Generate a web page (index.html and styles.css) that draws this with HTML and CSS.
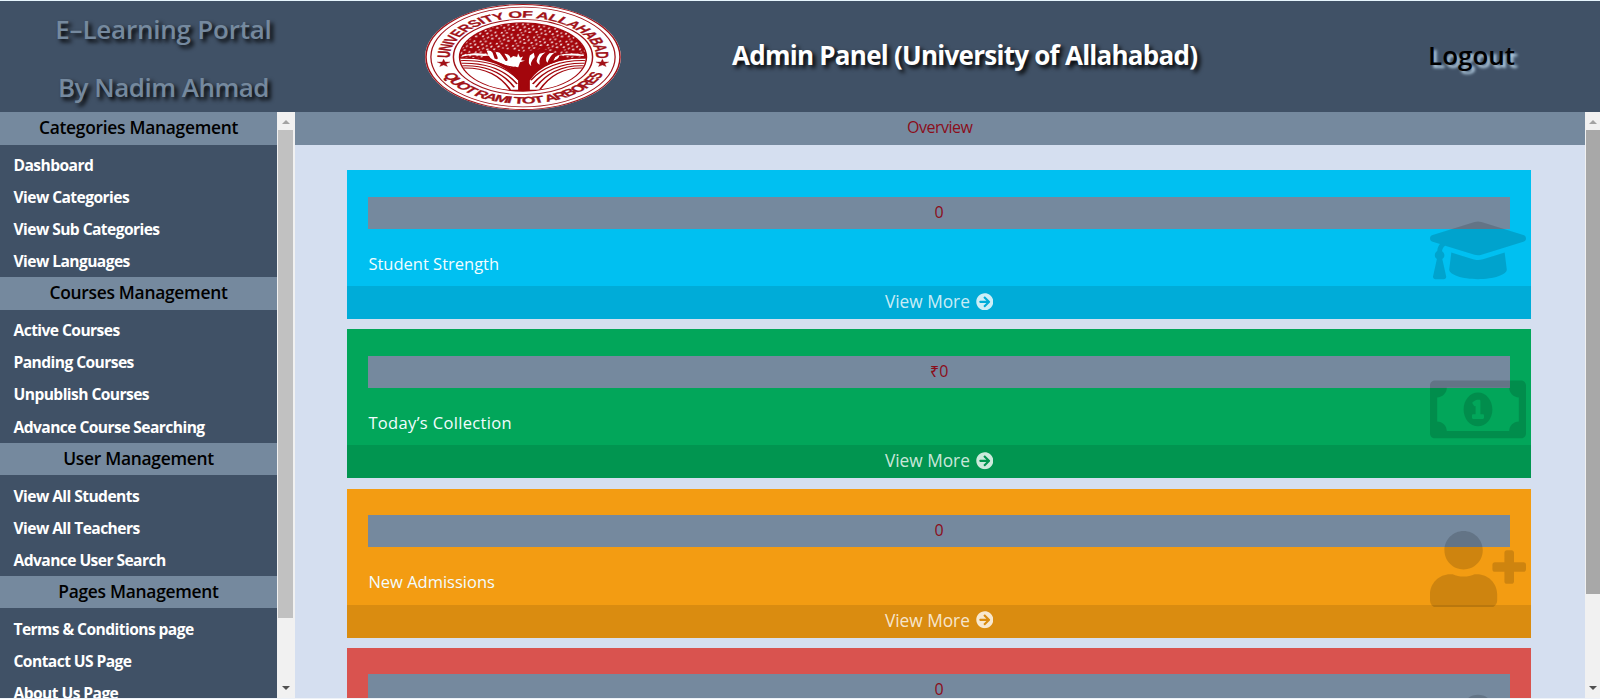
FILE: index.html
```html
<!DOCTYPE html>
<html lang="en">
<head>
<meta charset="utf-8">
<title>Admin Panel</title>
<link rel="stylesheet" href="styles.css">
</head>
<body>
<svg width="0" height="0" class="defs">
  <symbol id="arrow" viewBox="0 0 512 512"><path d="M256 8c137 0 248 111 248 248S393 504 256 504 8 393 8 256 119 8 256 8zm-28.9 143.6l75.5 72.4H120c-13.3 0-24 10.7-24 24v16c0 13.3 10.7 24 24 24h182.6l-75.5 72.4c-9.7 9.3-9.9 24.8-.4 34.3l11 10.9c9.4 9.4 24.6 9.4 33.9 0L404.3 273c9.4-9.4 9.4-24.6 0-33.9L271.6 106.3c-9.4-9.4-24.6-9.4-33.9 0l-11 10.9c-9.5 9.6-9.3 25.1.4 34.4z"/></symbol>
</svg>
<header class="header">
  <div class="brand"><span>E–Learning Portal</span><span class="brand-by">By Nadim Ahmad</span></div>
  <svg class="logo" viewBox="-100 -100 200 200" preserveAspectRatio="none">
    <defs>
      <path id="top" d="M-74.500 6A74.700 74.700 0 1 1 74.500 6"/>
      <path id="bottom" d="M-88 0A88 88 0 0 0 88 0"/>
      <clipPath id="disc"><circle r="64"/></clipPath>
      <pattern id="leaves" width="17" height="21" patternUnits="userSpaceOnUse" patternTransform="rotate(14)">
        <g fill="#fff" opacity=".85"><ellipse cx="2" cy="3" rx="1.1" ry="1.9"/><ellipse cx="7" cy="1.8" rx="1.4" ry="1.4"/><ellipse cx="12.5" cy="4" rx="1" ry="2"/><ellipse cx="5" cy="8" rx="1.3" ry="1.8"/><ellipse cx="10" cy="9.6" rx="1.2" ry="1.5"/><ellipse cx="15" cy="10" rx="1.1" ry="2"/><ellipse cx="2" cy="14" rx="1.2" ry="1.7"/><ellipse cx="7.5" cy="15" rx="1" ry="2"/><ellipse cx="12.3" cy="16" rx="1.4" ry="1.6"/><ellipse cx="4.4" cy="19" rx="1" ry="1.2"/></g>
      </pattern>
    </defs>
    <circle r="100" fill="#fff"/>
    <g fill="none" stroke="#a11218"><circle r="99" stroke-width="1.6"/><circle r="94" stroke-width="1.3"/><circle r="71" stroke-width="1.5"/></g>
    <circle r="65.5" fill="#a3060c"/>
    <g clip-path="url(#disc)">
      <path fill="url(#leaves)" d="M-66 0V-68H66V0L46 2 20-16 0-10-22-16-44 4z"/>
      <g fill="#fff">
        <path d="M-37-12q4-2 6 4l2 11q4 4 3-3l-2-9q4-2 6 5l4 11q3 2 2-4l-3-9q4-1 6 6l3 14q-1 8-7 2l-10-8q-8-4-10-20z"/>
        <path d="M-10-2l4 2 1-7 2 8 3-2-2 7 4 1-5 3 4 4-5 2 2 6-6-4-5 3 2-7-5-2 5-3-3-5z"/>
        <path d="M7-3l4-5 1 8q-6 12-3 19-5-6-2-22zM17-6l6-3q-8 10-6 24-6-6 0-21zM27-7l5-1q-5 7-7 19-4-8 2-18zM33 0l4-4q0 8-6 11z"/>
        <path d="M-66 3Q-24 0-5 44L-5 62H-24Q-54 50-66 25zM66 3Q24 0 7 44L7 62H24Q54 50 66 25z"/>
        <path d="M-62-4l12-3q10-1 18 4l-8 1q-12-3-22 1zM62-4Q50-10 34-3q10-1 28 1z"/>
      </g>
      <g fill="none" stroke="#a3060c" stroke-width="1.9">
        <path d="M-66 2Q-22-1-3 37M-66 7Q-24 4-4 44M-66 12Q-26 8-6 51M-66 17Q-28 12-9 57M-64 21Q-30 17-13 62M66 2Q26-1 7 37M66 7Q28 4 8 44M66 12Q30 8 10 51M66 17Q32 12 13 57M64 21Q34 17 17 62"/>
      </g>
      <path fill="#a3060c" d="M-34 10Q-12 15-6 30Q-4 46-1 65H3Q5 44 9 30Q15 17 34 10L8 17 3 8-3 10-5 20z"/>
    </g>
    <g fill="#a11218" class="seal-text">
      <text><textPath href="#top" startOffset="4" textLength="238" lengthAdjust="spacing">UNIVERSITY OF ALLAHABAD</textPath></text>
      <text><textPath href="#bottom" startOffset="34" textLength="210" lengthAdjust="spacing">QUOT RAMI TOT ARBORES</textPath></text>
      <path d="M-81 4l1.500 5.300 5 .1-4 3.300 1.400 5.400-3.900-3.200-4 3.200 1.400-5.400-4-3.300 5.100-.1zM81 4l1.500 5.300 5 .1-4 3.300 1.400 5.400-3.900-3.200-4 3.200 1.400-5.400-4-3.300 5.100-.1z"/>
    </g>
  </svg>
  <h1 class="title">Admin Panel (University of Allahabad)</h1>
  <a class="logout">Logout</a>
</header>
<div class="body">
  <nav class="sidebar">
    <h2 class="bar">Categories Management</h2>
    <ul><li>Dashboard</li><li>View Categories</li><li>View Sub Categories</li><li>View Languages</li></ul>
    <h2 class="bar">Courses Management</h2>
    <ul><li>Active Courses</li><li>Panding Courses</li><li>Unpublish Courses</li><li>Advance Course Searching</li></ul>
    <h2 class="bar">User Management</h2>
    <ul><li>View All Students</li><li>View All Teachers</li><li>Advance User Search</li></ul>
    <h2 class="bar">Pages Management</h2>
    <ul><li>Terms &amp; Conditions page</li><li>Contact US Page</li><li>About Us Page</li></ul>
  </nav>
  <div class="scroll scroll-left"><i class="up"></i><b class="thumb"></b><i class="down"></i></div>
  <main class="main">
    <div class="overview">Overview</div>
    <div class="cards">
      <section class="card blue">
        <div class="value">0</div><p class="label">Student Strength</p>
        <svg class="icon" viewBox="0 0 640 512"><path d="M622.34 153.2L343.4 67.5c-15.2-4.67-31.6-4.67-46.79 0L17.66 153.2c-23.54 7.23-23.54 38.36 0 45.59l48.63 14.94c-10.67 13.19-17.23 29.28-17.88 46.9C38.78 266.15 32 276.11 32 288c0 10.78 5.68 19.85 13.86 25.65L20.33 428.53C18.11 438.52 25.71 448 35.94 448h56.11c10.24 0 17.84-9.48 15.62-19.47L82.14 313.65C90.32 307.85 96 298.78 96 288c0-11.57-6.47-21.25-15.66-26.87.76-15.02 8.44-28.3 20.69-36.72L296.6 284.5c9.06 2.78 26.44 6.25 46.79 0l278.95-85.7c23.55-7.24 23.55-38.36 0-45.6zM352.79 315.09c-28.53 8.76-52.84 3.92-65.59 0l-145.02-44.55L128 384c0 35.35 85.96 64 192 64s192-28.65 192-64l-14.18-113.47-145.03 44.56z"/></svg>
        <a class="more">View More <svg><use href="#arrow"/></svg></a>
      </section>
      <section class="card green">
        <div class="value">₹0</div><p class="label label-wide">Today’s Collection</p>
        <svg class="icon" viewBox="0 0 640 512"><path d="M320 144c-53.02 0-96 50.14-96 112 0 61.85 42.98 112 96 112 53 0 96-50.13 96-112 0-61.86-42.98-112-96-112zm40 168c0 4.42-3.58 8-8 8h-64c-4.42 0-8-3.58-8-8v-16c0-4.42 3.58-8 8-8h16v-55.44l-.47.31a7.992 7.992 0 0 1-11.09-2.22l-8.88-13.31a7.994 7.994 0 0 1 2.22-11.09l15.33-10.22a23.99 23.99 0 0 1 13.31-4.03H328c4.42 0 8 3.58 8 8V288h16c4.42 0 8 3.58 8 8v16zM608 64H32C14.33 64 0 78.33 0 96v320c0 17.67 14.33 32 32 32h576c17.67 0 32-14.33 32-32V96c0-17.67-14.33-32-32-32zm-16 272c-35.35 0-64 28.65-64 64H112c0-35.35-28.65-64-64-64V176c35.35 0 64-28.65 64-64h416c0 35.35 28.65 64 64 64v160z"/></svg>
        <a class="more">View More <svg><use href="#arrow"/></svg></a>
      </section>
      <section class="card orange">
        <div class="value">0</div><p class="label">New Admissions</p>
        <svg class="icon" viewBox="0 0 640 512"><path d="M624 208h-64v-64c0-8.8-7.2-16-16-16h-32c-8.8 0-16 7.2-16 16v64h-64c-8.8 0-16 7.2-16 16v32c0 8.8 7.2 16 16 16h64v64c0 8.8 7.2 16 16 16h32c8.8 0 16-7.2 16-16v-64h64c8.8 0 16-7.2 16-16v-32c0-8.8-7.2-16-16-16zm-400 48c70.7 0 128-57.3 128-128S294.7 0 224 0 96 57.3 96 128s57.3 128 128 128zm89.6 32h-16.7c-22.2 10.2-46.9 16-72.9 16s-50.6-5.8-72.9-16h-16.7C60.2 288 0 348.2 0 422.4V464c0 26.5 21.5 48 48 48h352c26.5 0 48-21.5 48-48v-41.6c0-74.2-60.2-134.4-134.4-134.4z"/></svg>
        <a class="more">View More <svg><use href="#arrow"/></svg></a>
      </section>
      <section class="card red">
        <div class="value">0</div>
        <svg class="icon" viewBox="0 0 640 512"><path d="M96 224c35.3 0 64-28.7 64-64s-28.7-64-64-64-64 28.7-64 64 28.7 64 64 64zm448 0c35.3 0 64-28.7 64-64s-28.7-64-64-64-64 28.7-64 64 28.7 64 64 64zm-224 32c61.9 0 112-50.1 112-112S381.9 32 320 32 208 82.1 208 144s50.1 112 112 112z"/></svg>
      </section>
    </div>
  </main>
  <div class="scroll scroll-right"><i class="up"></i><b class="thumb"></b><i class="down"></i></div>
</div>
</body>
</html>
```
FILE: styles.css
```css
* { box-sizing: border-box; margin: 0; padding: 0; }
html, body { height: 699px; overflow: hidden; }
body {
  display: flex; flex-direction: column;
  font-family: "Open Sans", "Noto Sans", sans-serif;
  border-top: 1px solid #e6f5fd; border-bottom: 1px solid #eef2f8;
  white-space: nowrap;
}
.defs { position: absolute; }
.header { display: flex; flex: 0 0 111px; height: 111px; min-height: 0; background: #405166; align-items: center; }
.brand {
  width: 327px; height: 111px; margin-top: -3px;
  display: flex; flex-direction: column; align-items: center;
  color: #75899e; font-size: 26px; font-weight: 600; line-height: 58px;
  text-shadow: 3px 3px 4px #000; letter-spacing: -0.22px;
}
.brand-by { letter-spacing: -0.5px; }
.logo { flex: none; width: 196px; height: 106px; margin-left: 98px; }
.seal-text { font: bold 18px "Liberation Sans", sans-serif; stroke: #a11218; stroke-width: .4px; }
.title { margin: 0 0 4px 111px; width: 466px; color: #fff; font-size: 26px; font-weight: 700; letter-spacing: -0.74px; text-shadow: 3px 3px 4px #000; }
.logout { margin: 0 0 4px 230px; color: #000; font-size: 26px; font-weight: 600; text-shadow: 3px 3px 3px #b5d0e4; }
.body { display: flex; flex: 1; min-height: 0; }
.sidebar { width: 277px; overflow: hidden; background: #405166; }
.bar { height: 32.6px; line-height: 30.4px; background: #75899e; color: #000; font-size: 17.4px; font-weight: 600; text-align: center; letter-spacing: -0.28px; }
.sidebar ul { list-style: none; padding: 4.5px 0 0 13.5px; }
.sidebar li { height: 32.05px; line-height: 32px; color: #fff; font-size: 15.6px; font-weight: 700; letter-spacing: -0.57px; }
.scroll { display: flex; flex-direction: column; align-items: center; background: #f1f1f1; }
.scroll-left { width: 17.5px; }
.scroll-right { width: 15px; }
.up, .down { width: 0; height: 0; border: 4px solid transparent; flex: none; }
.up { border-bottom-color: #a3a3a3; border-top: 0; margin: 8px 0 6px; }
.down { border-top-color: #505050; border-bottom: 0; margin: auto 0 8px; }
.thumb { background: #c1c1c1; width: 15px; height: 488px; }
.scroll-right .thumb { background: #a8a8a8; width: 14px; height: 464px; align-self: flex-end; }
.main { flex: 1; overflow: hidden; background: #d5dff0; }
.overview, .value { height: 32.6px; line-height: 31px; background: #75899e; color: #8b0d1a; font-size: 16px; text-align: center; }
.overview { letter-spacing: -0.5px; }
.cards { display: flex; flex-direction: column; gap: 10.2px; padding: 25.6px 54px 0 52.9px; }
.card { position: relative; height: 149px; padding: 26.5px 21px 0; display: flex; flex-direction: column; flex: none; }
.value { height: 32.2px; flex: none; }
.label { color: #f2fdff; font-size: 16.5px; line-height: 24px; margin-top: 23px; }
.label-wide { letter-spacing: .35px; }
.icon { position: absolute; top: 42px; right: 5px; width: 96px; height: 76.8px; fill: rgba(0, 0, 0, .15); }
.more { margin: auto -21px 0; padding-bottom: 2px; height: 33px; background: rgba(0, 0, 0, .1); color: rgba(255, 255, 255, .8); font-size: 17.3px; display: flex; justify-content: center; align-items: center; gap: 6px; flex: none; }
.more svg { width: 17.6px; height: 17.6px; fill: currentColor; }
.blue { background: #00c0f1; }
.green { background: #02a65a; }
.orange { background: #f39c12; }
.red { background: #d9534f; }
```
